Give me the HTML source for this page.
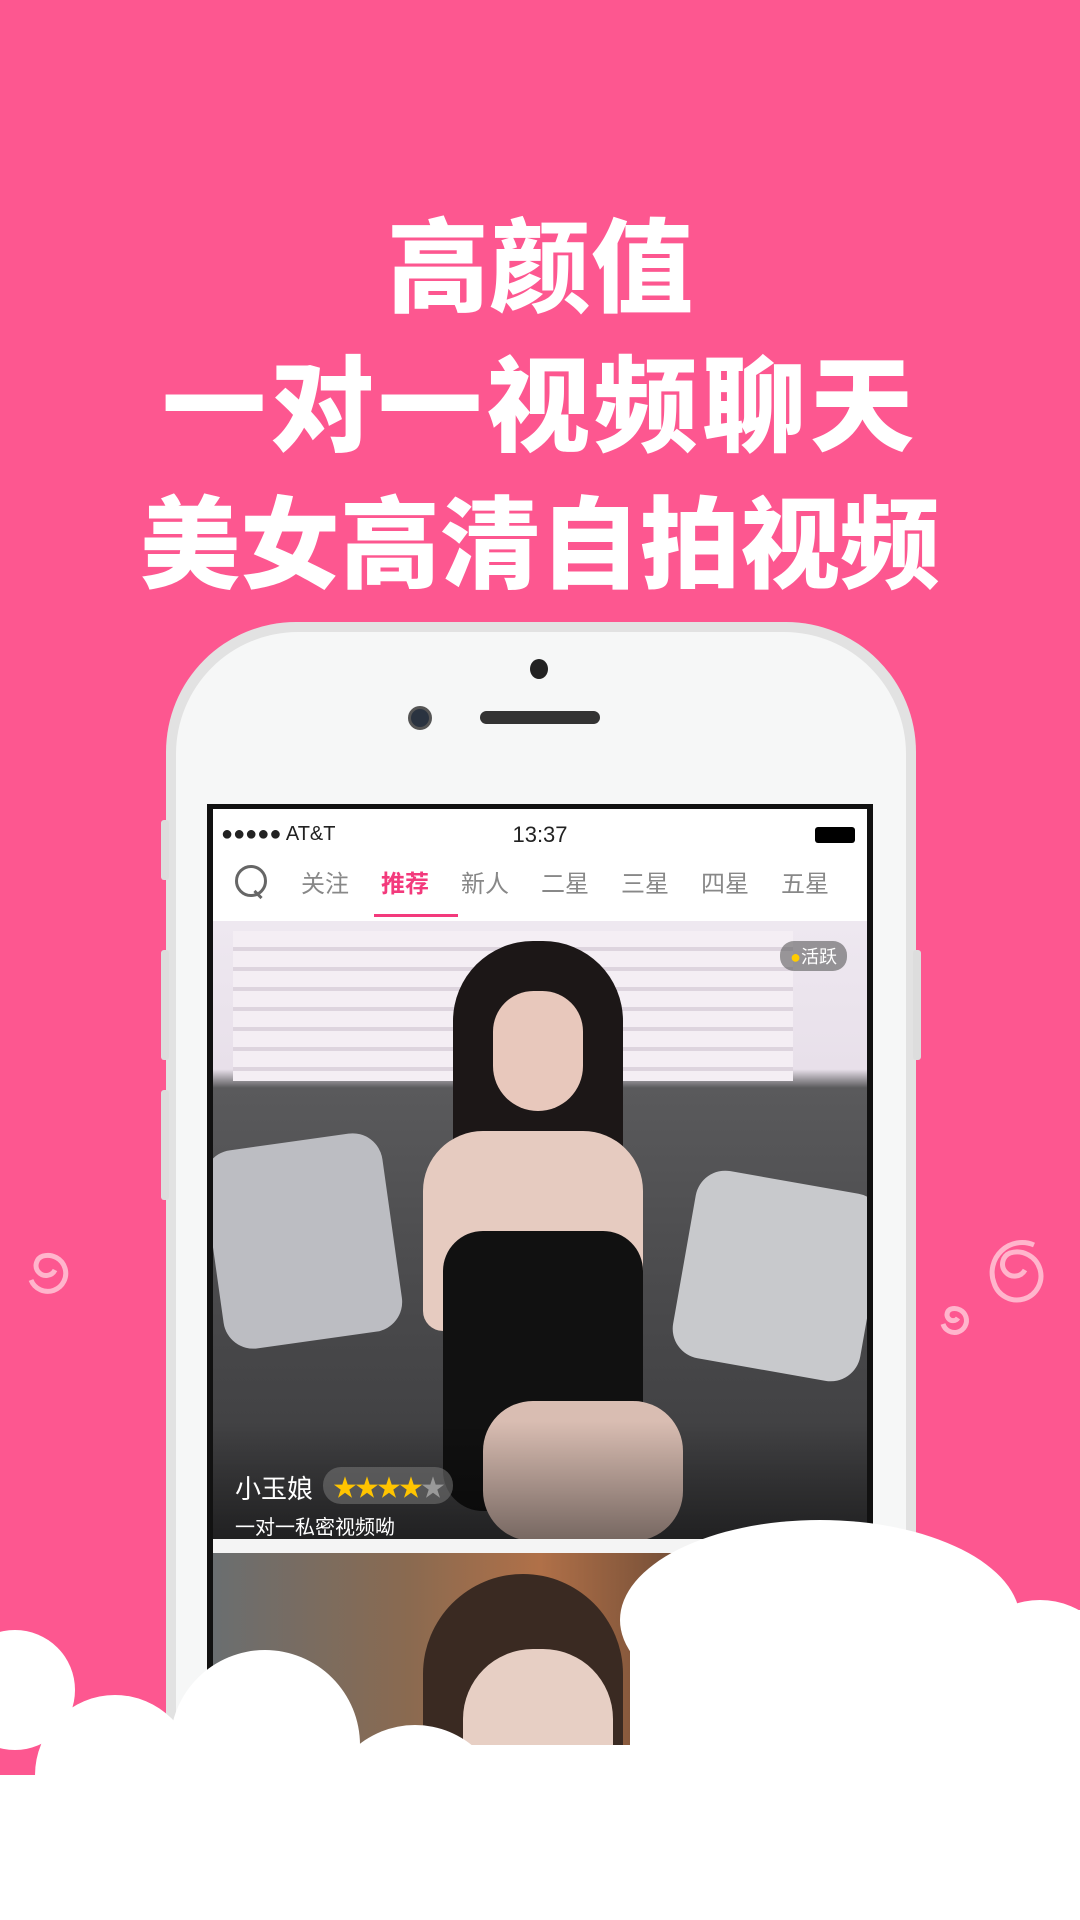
<!DOCTYPE html>
<html><head><meta charset="utf-8"><style>
*{margin:0;padding:0;box-sizing:border-box}
html,body{width:1080px;height:1920px;overflow:hidden}
body{background:#fd5790;font-family:"Liberation Sans","Noto Sans CJK SC",sans-serif}
#w{position:relative;width:1080px;height:1920px;overflow:hidden;background:#fd5790}
.t{position:absolute;left:0;width:1080px;text-align:center;color:#fff;font-weight:900;font-family:"Noto Sans CJK SC",sans-serif;line-height:1}
.abs{position:absolute}
</style></head><body><div id="w">
<div class="t" style="top:210px;font-size:102px">高颜值</div>
<div class="t" style="top:346px;font-size:104px;letter-spacing:4px">一对一视频聊天</div>
<div class="t" style="top:487px;font-size:100px">美女高清自拍视频</div>

<div class="abs" style="left:166px;top:622px;width:750px;height:1298px;border-radius:130px 130px 0 0;background:#e2e2e2"></div>
<div class="abs" style="left:176px;top:632px;width:730px;height:1288px;border-radius:122px 122px 0 0;background:#f6f7f7"></div>
<div class="abs" style="left:161px;top:820px;width:8px;height:60px;background:#ddd;border-radius:3px"></div>
<div class="abs" style="left:161px;top:950px;width:8px;height:110px;background:#ddd;border-radius:3px"></div>
<div class="abs" style="left:161px;top:1090px;width:8px;height:110px;background:#ddd;border-radius:3px"></div>
<div class="abs" style="left:913px;top:950px;width:8px;height:110px;background:#ddd;border-radius:3px"></div>
<div class="abs" style="left:530px;top:659px;width:18px;height:20px;border-radius:50%;background:#222"></div>
<div class="abs" style="left:408px;top:706px;width:24px;height:24px;border-radius:50%;background:#2a3340;border:3px solid #555"></div>
<div class="abs" style="left:480px;top:711px;width:120px;height:13px;border-radius:7px;background:#333"></div>

<div class="abs" style="left:207px;top:804px;width:666px;height:1116px;background:#111;padding:5px 6px 0;overflow:hidden">
 <div style="background:#fff;height:1111px;position:relative;overflow:hidden">
  <div class="abs" style="left:8px;top:14px;font-size:20px;color:#222">●●●●● AT&amp;T</div>
  <div class="abs" style="left:0;width:654px;text-align:center;top:13px;font-size:22px;color:#222">13:37</div>
  <div class="abs" style="right:12px;top:18px;width:40px;height:16px;background:#000;border-radius:3px"></div>
  <div class="abs" style="left:22px;top:56px;width:32px;height:32px;border:3px solid #666;border-radius:50%"></div>
  <div class="abs" style="left:40px;top:84px;width:10px;height:3px;background:#666;transform:rotate(45deg)"></div>
  <div class="abs" style="left:88px;top:55px;font-size:24px;color:#888;white-space:nowrap">
   <span style="display:inline-block;width:80px">关注</span><span style="display:inline-block;width:80px;color:#f33a7c;font-weight:bold">推荐</span><span style="display:inline-block;width:80px">新人</span><span style="display:inline-block;width:80px">二星</span><span style="display:inline-block;width:80px">三星</span><span style="display:inline-block;width:80px">四星</span><span style="display:inline-block;width:80px">五星</span>
  </div>
  <div class="abs" style="left:161px;top:105px;width:84px;height:3px;background:#f33a7c"></div>
  <div class="abs" style="left:0;top:112px;width:654px;height:618px;overflow:hidden;background:linear-gradient(#eee8f0 0%,#e8e0ea 24%,#5a5a5c 27%,#4a4a4c 60%,#3b3b3d 100%)">
   <div class="abs" style="left:20px;top:10px;width:560px;height:150px;background:repeating-linear-gradient(#f4eef4 0 16px,#ddd4de 16px 20px)"></div>
   <div class="abs" style="left:0;top:220px;width:180px;height:200px;background:#bcbdc2;border-radius:30px;transform:rotate(-8deg)"></div>
   <div class="abs" style="left:470px;top:260px;width:190px;height:190px;background:#c8c9cc;border-radius:30px;transform:rotate(10deg)"></div>
   <div class="abs" style="left:240px;top:20px;width:170px;height:360px;background:#1c1717;border-radius:80px 80px 30px 30px"></div>
   <div class="abs" style="left:280px;top:70px;width:90px;height:120px;background:#e8c8bc;border-radius:45px 45px 50px 50px"></div>
   <div class="abs" style="left:210px;top:210px;width:220px;height:200px;background:#e6cbc0;border-radius:60px 60px 20px 20px"></div>
   <div class="abs" style="left:230px;top:310px;width:200px;height:280px;background:#111;border-radius:40px"></div>
   <div class="abs" style="left:270px;top:480px;width:200px;height:140px;background:#d9bdb2;border-radius:50px"></div>
   <div class="abs" style="left:0;top:500px;width:654px;height:118px;background:linear-gradient(transparent,rgba(0,0,0,.45))"></div>
   <div class="abs" style="right:20px;top:20px;background:rgba(90,90,90,.6);color:#fff;font-size:18px;padding:2px 10px;border-radius:14px"><span style="color:#ffcc00">●</span>活跃</div>
   <div class="abs" style="left:22px;top:548px;color:#fff;font-size:26px">小玉娘</div>
   <div class="abs" style="left:110px;top:546px;background:rgba(120,120,120,.55);color:#ffc400;font-size:24px;padding:1px 10px;border-radius:18px;letter-spacing:-2px">★★★★<span style="color:#999">★</span></div>
   <div class="abs" style="left:22px;top:590px;color:#fff;font-size:20px">一对一私密视频呦</div>
  </div>
  <div class="abs" style="left:0;top:730px;width:654px;height:14px;background:#f4f4f4"></div>
  <div class="abs" style="left:0;top:744px;width:654px;height:367px;background:linear-gradient(90deg,#6a6e70 0%,#8a6a50 30%,#b07048 50%,#5a4030 80%)"></div>
  <div class="abs" style="left:210px;top:765px;width:200px;height:250px;background:#3a2a22;border-radius:100px 100px 0 0"></div>
  <div class="abs" style="left:250px;top:840px;width:150px;height:200px;background:#e7cfc4;border-radius:70px"></div>
 </div>
</div>

<svg class="abs" style="left:0;top:0" width="1080" height="1920">
 <g fill="#fff">
  <circle cx="15" cy="1690" r="60"/>
  <circle cx="115" cy="1775" r="80"/>
  <circle cx="265" cy="1745" r="95"/>
  <circle cx="415" cy="1815" r="90"/>
  <circle cx="540" cy="1840" r="90"/>
  <ellipse cx="820" cy="1620" rx="200" ry="100"/>
  <circle cx="700" cy="1660" r="70"/>
  <circle cx="1040" cy="1680" r="80"/>
  <rect x="630" y="1610" width="450" height="310"/>
  <rect x="0" y="1775" width="1080" height="145"/>
  <rect x="100" y="1745" width="600" height="175"/>
 </g>
 <g fill="none" stroke="#ffb5cc" stroke-width="5">
  <path d="M55 1270 a10 10 0 1 1 -12 -14 a18 18 0 1 1 -12 24"/>
  <path d="M1025 1270 a12 12 0 1 1 -15 -17 a24 24 0 1 1 -16 30 a30 30 0 0 1 40 -38"/>
  <path d="M958 1318 a6 6 0 1 1 -7 -9 a12 12 0 1 1 -8 15"/>
 </g>
</svg>
</div></body></html>
